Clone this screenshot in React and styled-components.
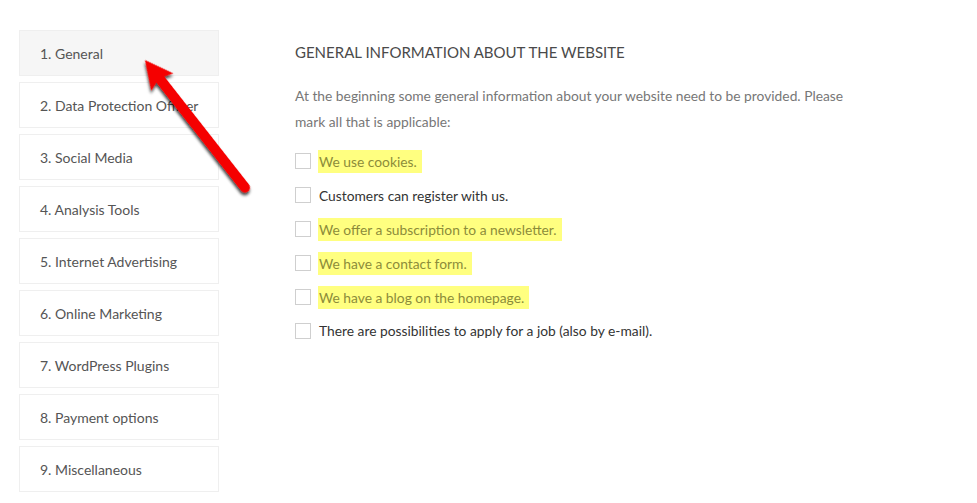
import React from 'react';
import styled, { createGlobalStyle } from 'styled-components';

const GlobalStyle = createGlobalStyle`
	html, body {
		margin: 0;
		padding: 0;
		background: #fff;
	}
	body {
		font-family: 'Lato', 'Open Sans', sans-serif;
		-webkit-font-smoothing: antialiased;
	}
`;

const Page = styled.div`
	position: relative;
	display: flex;
	align-items: flex-start;
	padding: 30px 0 0 19px;
	width: 977px;
	height: 503px;
	box-sizing: border-box;
	overflow: hidden;
`;

const Sidebar = styled.ul`
	list-style: none;
	margin: 0;
	padding: 0;
	width: 200px;
	display: flex;
	flex-direction: column;
	gap: 6px;
	flex-shrink: 0;
`;

const NavItem = styled.li`
	height: 46px;
	box-sizing: border-box;
	display: flex;
	align-items: center;
	padding-left: 20px;
	border: 1px solid #efefef;
	background: ${props => (props.active ? '#f6f6f6' : '#fff')};
	color: #555;
	font-size: 14px;
	white-space: nowrap;
	overflow: hidden;
`;

const Main = styled.section`
	margin-left: 76px;
	margin-top: 12px;
	width: 560px;
`;

const Heading = styled.h2`
	margin: 0 0 21px;
	font-size: 15px;
	line-height: 20px;
	font-weight: 400;
	text-transform: uppercase;
	color: #4a4a4a;
`;

const Intro = styled.p`
	margin: 0 0 9.5px;
	font-size: 13.8px;
	line-height: 26px;
	color: #777;
`;

const Options = styled.div`
	display: flex;
	flex-direction: column;
`;

const Option = styled.label`
	height: 33.9px;
	display: flex;
	align-items: center;
	gap: 8px;
	font-size: 13.8px;
	color: #333;
`;

const Box = styled.span`
	width: 16px;
	height: 16px;
	box-sizing: border-box;
	border: 1px solid #cfcfcf;
	background: #fff;
	flex-shrink: 0;
`;

const Label = styled.span`
	display: inline-flex;
	align-items: center;
	height: 23px;
	padding: 0 ${props => (props.marked ? '5px' : '0')} 0 1px;
	margin-left: -1px;
	background: ${props => (props.marked ? '#ffff80' : 'transparent')};
	color: ${props => (props.marked ? '#8c8c3a' : '#333')};
`;

const Arrow = styled.svg`
	position: absolute;
	left: 0;
	top: 0;
	pointer-events: none;
`;

const sections = [
	'1. General',
	'2. Data Protection Officer',
	'3. Social Media',
	'4. Analysis Tools',
	'5. Internet Advertising',
	'6. Online Marketing',
	'7. WordPress Plugins',
	'8. Payment options',
	'9. Miscellaneous',
];

const options = [
	{ text: 'We use cookies.', marked: true },
	{ text: 'Customers can register with us.', marked: false },
	{ text: 'We offer a subscription to a newsletter.', marked: true },
	{ text: 'We have a contact form.', marked: true },
	{ text: 'We have a blog on the homepage.', marked: true },
	{ text: 'There are possibilities to apply for a job (also by e-mail).', marked: false },
];

export default function App() {
	return (
		<>
			<GlobalStyle />
			<Page>
				<Sidebar>
					{sections.map((s, i) => (
						<NavItem key={s} active={i === 0}>{s}</NavItem>
					))}
				</Sidebar>
				<Main>
					<Heading>General information about the website</Heading>
					<Intro>
						At the beginning some general information about your website need to be provided. Please mark all that is applicable:
					</Intro>
					<Options>
						{options.map(o => (
							<Option key={o.text}>
								<Box />
								<Label marked={o.marked}>{o.text}</Label>
							</Option>
						))}
					</Options>
				</Main>
				<Arrow width="977" height="503" viewBox="0 0 977 503">
					<defs>
						<filter id="shadow" x="-20%" y="-20%" width="140%" height="140%">
							<feDropShadow dx="2" dy="2" stdDeviation="1.6" floodColor="#000" floodOpacity="0.75" />
						</filter>
					</defs>
					<g transform="translate(145 60) rotate(51.9)" filter="url(#shadow)">
						<line x1="20" y1="0" x2="162" y2="0" stroke="#f50000" strokeWidth="10" strokeLinecap="round" />
						<polygon points="0,0 28,-14 23,0 28,14" fill="#f50000" />
					</g>
				</Arrow>
			</Page>
		</>
	);
}
